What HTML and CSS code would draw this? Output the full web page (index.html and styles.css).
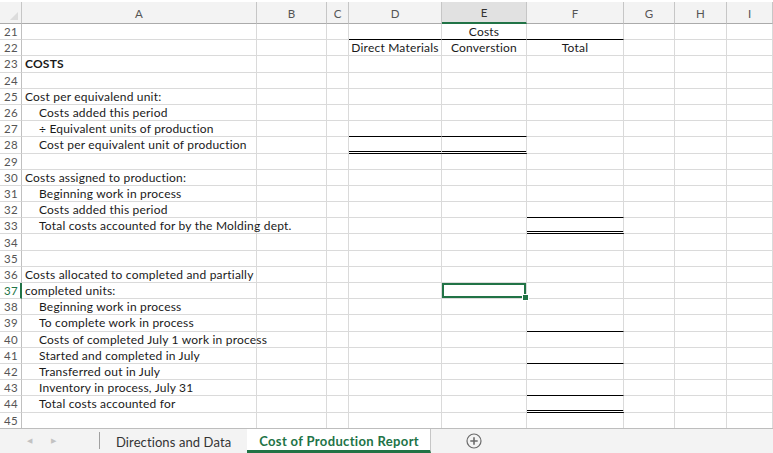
FILE: index.html
```html
<!DOCTYPE html>
<html lang="en">
<head>
    <meta charset="UTF-8">
    <title>Cost of Production Report</title>
    <link rel="stylesheet" href="styles.css">
</head>
<body>
    <div class="workbook">
        <div class="sheet" id="sheet">
            <!-- column headers -->
            <div class="corner"><span class="corner-tri"></span></div>
            <div class="colhead">A</div>
            <div class="colhead">B</div>
            <div class="colhead">C</div>
            <div class="colhead">D</div>
            <div class="colhead active">E</div>
            <div class="colhead">F</div>
            <div class="colhead">G</div>
            <div class="colhead">H</div>
            <div class="colhead">I</div>
            <!-- rows are filled in by the script below -->
        </div>

        <div class="tabbar">
            <div class="tab-nav">
                <span class="nav-arrow">&#9664;</span>
                <span class="nav-arrow">&#9654;</span>
            </div>
            <div class="tab">Directions and Data</div>
            <div class="tab current">Cost of Production Report</div>
            <div class="add-sheet">
                <svg width="16" height="16" viewBox="0 0 16 16">
                    <circle cx="8" cy="8" r="7" fill="none" stroke="#6b6b6b" stroke-width="1.2"/>
                    <path d="M8 4.3v7.4M4.3 8h7.4" stroke="#6b6b6b" stroke-width="1.6"/>
                </svg>
            </div>
        </div>
    </div>

    <script>
        // Each row: [row number, text in A, indent level, bold, extra cells]
        // extra cells: { col: 'D', text, border: 'thin' | 'double', selected }
        const rows = [
            [21, '', 0, false, [{ col: 'D', border: 'thin' }, { col: 'E', text: 'Costs', border: 'thin' }, { col: 'F', border: 'thin' }]],
            [22, '', 0, false, [{ col: 'D', text: 'Direct Materials' }, { col: 'E', text: 'Converstion' }, { col: 'F', text: 'Total' }]],
            [23, 'COSTS', 0, true, []],
            [24, '', 0, false, []],
            [25, 'Cost per equivalend unit:', 0, false, []],
            [26, 'Costs added this period', 1, false, []],
            [27, '\u00f7 Equivalent units of production', 1, false, [{ col: 'D', border: 'thin' }, { col: 'E', border: 'thin' }]],
            [28, 'Cost per equivalent unit of production', 1, false, [{ col: 'D', border: 'double' }, { col: 'E', border: 'double' }]],
            [29, '', 0, false, []],
            [30, 'Costs assigned to production:', 0, false, []],
            [31, 'Beginning work in process', 1, false, []],
            [32, 'Costs added this period', 1, false, [{ col: 'F', border: 'thin' }]],
            [33, 'Total costs accounted for by the Molding dept.', 1, false, [{ col: 'F', border: 'double' }]],
            [34, '', 0, false, []],
            [35, '', 0, false, []],
            [36, 'Costs allocated to completed and partially', 0, false, []],
            [37, 'completed units:', 0, false, [{ col: 'E', selected: true }]],
            [38, 'Beginning work in process', 1, false, []],
            [39, 'To complete work in process', 1, false, [{ col: 'F', border: 'thin' }]],
            [40, 'Costs of completed July 1 work in process', 1, false, []],
            [41, 'Started and completed in July', 1, false, [{ col: 'F', border: 'thin' }]],
            [42, 'Transferred out in July', 1, false, []],
            [43, 'Inventory in process, July 31', 1, false, [{ col: 'F', border: 'thin' }]],
            [44, 'Total costs accounted for', 1, false, [{ col: 'F', border: 'double' }]],
            [45, '', 0, false, []]
        ];

        const columns = ['A', 'B', 'C', 'D', 'E', 'F', 'G', 'H', 'I'];
        const sheet = document.getElementById('sheet');

        rows.forEach(([num, label, indent, bold, extras]) => {
            const selectedRow = extras.some(x => x.selected);
            let html = `<div class="rowhead${selectedRow ? ' active' : ''}">${num}</div>`;

            columns.forEach(col => {
                const classes = ['cell'];
                let text = '';

                if (col === 'A') {
                    text = label;
                    if (indent) classes.push('indent');
                    if (bold) classes.push('bold');
                }

                const extra = extras.find(x => x.col === col);
                if (extra) {
                    if (extra.text) {
                        text = extra.text;
                        classes.push('center');
                    }
                    if (extra.border) classes.push('b-' + extra.border);
                    if (extra.selected) classes.push('selected');
                }

                html += `<div class="${classes.join(' ')}">${text}</div>`;
            });

            sheet.insertAdjacentHTML('beforeend', html);
        });
    </script>
</body>
</html>
```

FILE: styles.css
```css
:root {
    --grid-line: #dadada;
    --header-bg: #f3f3f3;
    --header-line: #c6c6c6;
    --header-text: #555;
    --excel-green: #217346;
    --row-height: 16.2px;
}

* {
    margin: 0;
    padding: 0;
    box-sizing: border-box;
}

body {
    font-family: 'Lato', 'Open Sans', sans-serif;
    font-size: 12px;
    letter-spacing: 0.2px;
    color: #1a1a1a;
    background-color: #fff;
    overflow: hidden;
}

.workbook {
    width: 773px;
    height: 453px;
    display: flex;
    flex-direction: column;
    padding-top: 2px;
}

.sheet {
    flex: 1;
    overflow: hidden;
    display: grid;
    grid-template-columns: 22px 235px 70px 22px 93px 85px 97px 51px 52px 1fr;
    grid-template-rows: 22px;
    grid-auto-rows: var(--row-height);
}

/* Column headers */
.corner {
    position: relative;
    background-color: var(--header-bg);
    border-right: 1px solid var(--header-line);
    border-bottom: 1px solid #ababab;
}

.corner-tri {
    position: absolute;
    right: 3px;
    bottom: 3px;
    width: 0;
    height: 0;
    border-left: 8px solid transparent;
    border-bottom: 8px solid #dcdcdc;
}

.colhead {
    background-color: var(--header-bg);
    color: var(--header-text);
    border-right: 1px solid var(--header-line);
    border-bottom: 1px solid #ababab;
    display: flex;
    align-items: center;
    justify-content: center;
    font-size: 11.5px;
    letter-spacing: 0;
    padding-top: 1px;
}

.colhead.active {
    background-color: #e1e1e1;
    color: #333;
    border-bottom: 2px solid var(--excel-green);
}

/* Row headers */
.rowhead {
    color: var(--header-text);
    border-right: 1px solid #c0c0c0;
    border-bottom: 1px solid var(--grid-line);
    display: flex;
    align-items: center;
    padding-left: 4px;
    font-size: 11.5px;
    letter-spacing: 0.3px;
}

.rowhead.active {
    color: var(--excel-green);
    border-right: 2px solid var(--excel-green);
}

/* Cells */
.cell {
    position: relative;
    border-right: 1px solid var(--grid-line);
    border-bottom: 1px solid var(--grid-line);
    display: flex;
    align-items: center;
    padding-left: 3px;
    white-space: nowrap;
}

.cell.indent {
    padding-left: 17px;
}

.cell.bold {
    font-weight: bold;
}

.cell.center {
    justify-content: center;
    padding-left: 0;
}

.cell.b-thin {
    border-bottom: 1px solid #000;
}

.cell.b-double {
    border-bottom: 3px double #000;
}

.cell.selected {
    box-shadow: inset 0 0 0 2px var(--excel-green);
}

.cell.selected::after {
    content: '';
    position: absolute;
    right: -3px;
    bottom: -3px;
    width: 5px;
    height: 5px;
    background-color: var(--excel-green);
    border: 1px solid #fff;
    z-index: 2;
}

/* Sheet tabs */
.tabbar {
    height: 25px;
    flex-shrink: 0;
    display: flex;
    align-items: stretch;
    background-color: #f3f3f3;
    border-top: 1px solid #bdbdbd;
    color: #333;
    font-size: 13px;
    letter-spacing: 0.1px;
}

.tab-nav {
    width: 100px;
    display: flex;
    align-items: center;
    gap: 19px;
    padding-left: 27px;
    border-right: 1px solid #a0a0a0;
    margin: 3px 0 4px;
}

.nav-arrow {
    font-size: 7px;
    color: #c2c2c2;
}

.tab {
    display: flex;
    align-items: center;
    padding: 1px 16px 0 16px;
}

.tab.current {
    background-color: #fff;
    color: var(--excel-green);
    font-weight: bold;
    letter-spacing: 0.35px;
    padding: 2px 11px 0 12px;
    border-bottom: 3px solid var(--excel-green);
    border-right: 1px solid #c6c6c6;
}

.add-sheet {
    display: flex;
    align-items: center;
    padding-left: 35px;
}
```
